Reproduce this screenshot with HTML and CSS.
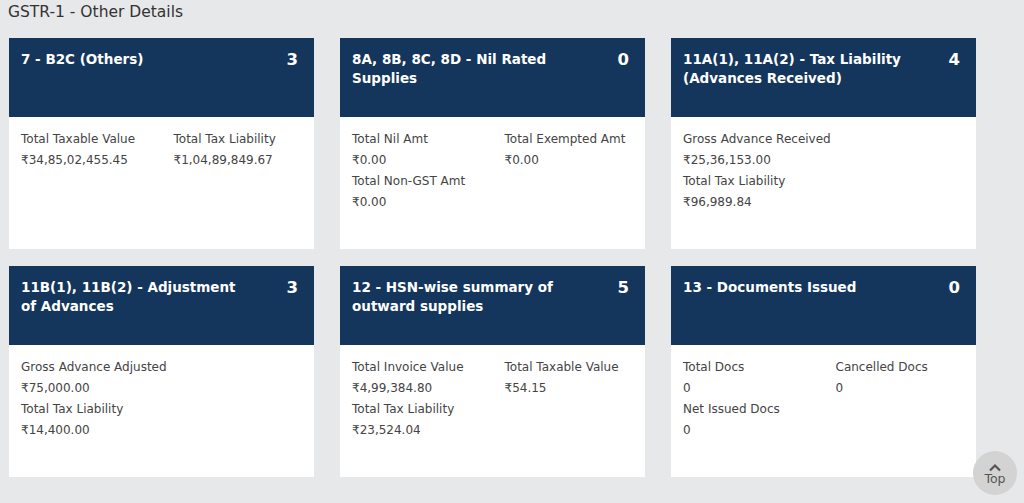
FILE: index.html
```html
<!DOCTYPE html>
<html lang="en">
<head>
  <meta charset="UTF-8" />
  <meta name="viewport" content="width=device-width, initial-scale=1" />
  <title>GSTR-1 - Other Details</title>
  <link rel="stylesheet" href="styles.css">
</head>
<body>

  <h4 class="page-title">GSTR-1 - Other Details</h4>

  <div class="tiles">

    <div class="tile">
      <div class="tile-head">
        <span class="tile-name">7 - B2C (Others)</span>
        <span class="tile-count">3</span>
      </div>
      <div class="tile-body">
        <div class="item"><p>Total Taxable Value</p><p>₹34,85,02,455.45</p></div>
        <div class="item"><p>Total Tax Liability</p><p>₹1,04,89,849.67</p></div>
      </div>
    </div>

    <div class="tile">
      <div class="tile-head">
        <span class="tile-name">8A, 8B, 8C, 8D - Nil Rated Supplies</span>
        <span class="tile-count">0</span>
      </div>
      <div class="tile-body">
        <div class="item"><p>Total Nil Amt</p><p>₹0.00</p></div>
        <div class="item"><p>Total Exempted Amt</p><p>₹0.00</p></div>
        <div class="item"><p>Total Non-GST Amt</p><p>₹0.00</p></div>
      </div>
    </div>

    <div class="tile">
      <div class="tile-head">
        <span class="tile-name">11A(1), 11A(2) - Tax Liability (Advances Received)</span>
        <span class="tile-count">4</span>
      </div>
      <div class="tile-body single">
        <div class="item"><p>Gross Advance Received</p><p>₹25,36,153.00</p></div>
        <div class="item"><p>Total Tax Liability</p><p>₹96,989.84</p></div>
      </div>
    </div>

    <div class="tile">
      <div class="tile-head">
        <span class="tile-name">11B(1), 11B(2) - Adjustment of Advances</span>
        <span class="tile-count">3</span>
      </div>
      <div class="tile-body single">
        <div class="item"><p>Gross Advance Adjusted</p><p>₹75,000.00</p></div>
        <div class="item"><p>Total Tax Liability</p><p>₹14,400.00</p></div>
      </div>
    </div>

    <div class="tile">
      <div class="tile-head">
        <span class="tile-name">12 - HSN-wise summary of outward supplies</span>
        <span class="tile-count">5</span>
      </div>
      <div class="tile-body">
        <div class="item"><p>Total Invoice Value</p><p>₹4,99,384.80</p></div>
        <div class="item"><p>Total Taxable Value</p><p>₹54.15</p></div>
        <div class="item"><p>Total Tax Liability</p><p>₹23,524.04</p></div>
      </div>
    </div>

    <div class="tile">
      <div class="tile-head">
        <span class="tile-name">13 - Documents Issued</span>
        <span class="tile-count">0</span>
      </div>
      <div class="tile-body">
        <div class="item"><p>Total Docs</p><p>0</p></div>
        <div class="item"><p>Cancelled Docs</p><p>0</p></div>
        <div class="item"><p>Net Issued Docs</p><p>0</p></div>
      </div>
    </div>

  </div>

  <a class="to-top" href="#">
    <svg width="14" height="9" viewBox="0 0 14 9"><path d="M2 7.5 L7 2.5 L12 7.5" fill="none" stroke="#555" stroke-width="2.2"/></svg>
    <span>Top</span>
  </a>

</body>
</html>
```

FILE: styles.css
```css
body {
  background-color: #e7e8ea;
  font-family: "DejaVu Sans", Verdana, sans-serif;
  color: #444;
  margin: 0;
  padding: 0 8px;
}
.page-title {
  font-size: 15.5px;
  font-weight: normal;
  color: #333;
  margin: 0;
  padding-top: 3px;
  height: 35px;
}
.tiles {
  display: grid;
  grid-template-columns: repeat(3, 305px);
  column-gap: 26px;
  row-gap: 17px;
  padding-left: 1px;
}
.tile {
  background-color: #fff;
  height: 211px;
}
.tile-head {
  background-color: #14365c;
  color: #fff;
  height: 79px;
  box-sizing: border-box;
  padding: 12px 16px 0 12px;
  display: flex;
  justify-content: space-between;
  align-items: flex-start;
}
.tile-name {
  font-size: 13.5px;
  font-weight: bold;
  line-height: 19px;
  width: 234px;
}
.tile-count {
  font-size: 16.5px;
  font-weight: bold;
  line-height: 19px;
}
.tile-body {
  display: grid;
  grid-template-columns: 1fr 1fr;
  padding-top: 12px;
}
.tile-body.single {
  grid-template-columns: 1fr;
}
.item {
  padding-left: 12px;
}
.item p {
  margin: 0;
  font-size: 12px;
  line-height: 21px;
}
.to-top {
  position: fixed;
  right: 7px;
  bottom: 8px;
  width: 44px;
  height: 44px;
  border-radius: 50%;
  background-color: #d3d3d3;
  color: #555;
  text-decoration: none;
  font-size: 12.5px;
  display: flex;
  flex-direction: column;
  align-items: center;
  justify-content: center;
  line-height: 13px;
}
.to-top svg {
  margin-top: 2px;
}
```
